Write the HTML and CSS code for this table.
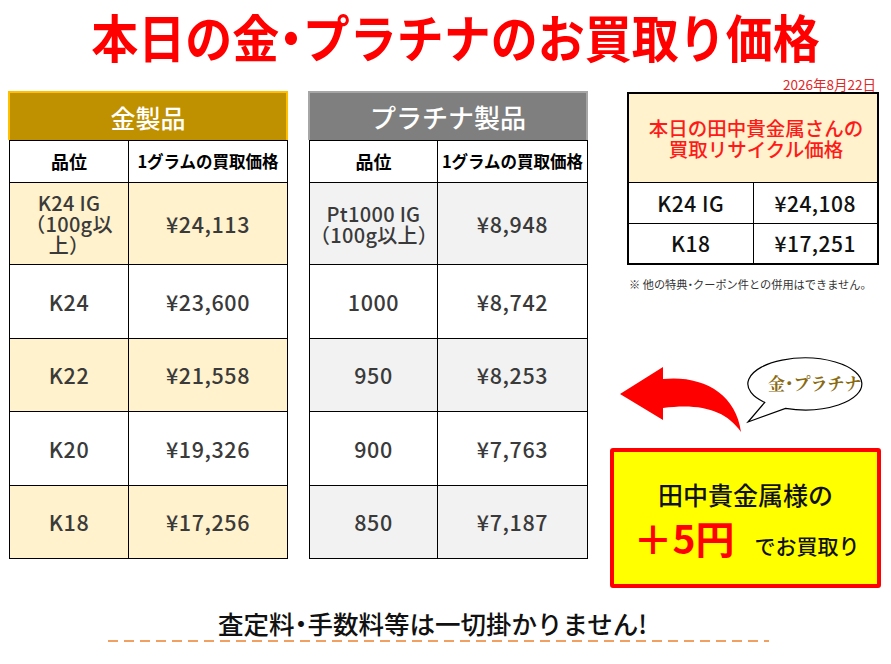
FILE: index.html
```html
<!DOCTYPE html>
<html lang="ja">
<head>
<meta charset="utf-8">
<title>本日の金・プラチナのお買取り価格</title>
<link rel="stylesheet" href="styles.css">
</head>
<body>
<div class="page">
  <h1 class="title"><span class="tt">本日の金<span class="dot">・</span>プラチナのお買取り価格</span></h1>
  <div class="main">
    <section class="board gold">
      <div class="hd">金製品</div>
      <table class="prices">
        <colgroup><col class="c1"><col class="c2"></colgroup>
        <tr class="th"><td class="q">品位</td><td>1グラムの買取価格</td></tr>
        <tr class="r1 alt"><td class="multi">K24 IG<br>（100g以<br>上）</td><td>¥24,113</td></tr>
        <tr class="r2"><td>K24</td><td>¥23,600</td></tr>
        <tr class="r3 alt"><td>K22</td><td>¥21,558</td></tr>
        <tr class="r4"><td>K20</td><td>¥19,326</td></tr>
        <tr class="r5 alt"><td>K18</td><td>¥17,256</td></tr>
      </table>
    </section>
    <section class="board plat">
      <div class="hd">プラチナ製品</div>
      <table class="prices">
        <colgroup><col class="c1"><col class="c2"></colgroup>
        <tr class="th"><td class="q">品位</td><td>1グラムの買取価格</td></tr>
        <tr class="r1 alt"><td class="multi">Pt1000 IG<br>（100g以上）</td><td>¥8,948</td></tr>
        <tr class="r2"><td>1000</td><td>¥8,742</td></tr>
        <tr class="r3 alt"><td>950</td><td>¥8,253</td></tr>
        <tr class="r4"><td>900</td><td>¥7,763</td></tr>
        <tr class="r5 alt"><td>850</td><td>¥7,187</td></tr>
      </table>
    </section>
    <aside class="side">
      <div class="date">2026年8月22日</div>
      <table class="recycle">
        <tr class="rhd"><td colspan="2">本日の田中貴金属さんの<br>買取リサイクル価格</td></tr>
        <tr class="rrow"><td class="rl">K24 IG</td><td>¥24,108</td></tr>
        <tr class="rrow"><td class="rl">K18</td><td>¥17,251</td></tr>
      </table>
      <p class="note">※ 他の特典<span class="pdot">・</span>クーポン件との併用はできません。</p>
      <svg class="callout" viewBox="610 292 281 155" width="281" height="155">
        <path d="M620,393 L663,366 L663,378 C702,374 736,392 741,431 C726,409 700,402 663,407 L663,419 Z" fill="#ff0000"/>
        <path d="M785.5,407.4 A57,26 0 1 0 764.7,401.4 L748,421 Z" fill="#ffffff" stroke="#000000" stroke-width="1.2"/>
        <text x="768" y="389" class="bubble-text">金<tspan class="pdot">・</tspan>プラチナ</text>
      </svg>
      <div class="bonus">
        <div class="b1">田中貴金属様の</div>
        <div class="b2"><span class="plus">＋5円</span><span class="tail">でお買取り</span></div>
      </div>
    </aside>
  </div>
  <footer class="foot">
    <p class="free">査定料<span class="pdot">・</span>手数料等は一切掛かりません!</p>
    <div class="dash"></div>
  </footer>
</div>
</body>
</html>
```
FILE: styles.css
```css
* { box-sizing: border-box; }
html, body { margin: 0; padding: 0; background: #ffffff; }
body {
  font-family: "Noto Sans CJK JP", "Noto Sans", sans-serif;
  color: #000;
}
.page { width: 891px; height: 664px; overflow: hidden; }

.title {
  margin: 0;
  height: 76px;
  display: flex;
  align-items: center;
  justify-content: center;
  padding-left: 20px;
  padding-bottom: 4px;
  color: #ff0000;
  font-size: 47px;
  font-weight: 700;
  line-height: 1.3;
}
.tt { display: inline-block; transform: scaleY(1.1); }
.title .dot { font-feature-settings: "palt" 1; }
.pdot { font-feature-settings: "palt" 1; }

.main { display: flex; padding-left: 8px; align-items: flex-start; }

.board { width: 280px; margin-top: 15px; }
.plat { margin-left: 20px; }

.hd {
  height: 49px;
  display: flex;
  align-items: center;
  justify-content: center;
  color: #ffffff;
  font-weight: 500;
}
.gold .hd { background: #bf9000; border: 2px solid #ffc000; border-bottom: none; font-size: 25px; }
.plat .hd { background: #7f7f7f; border: 2px solid #a6a6a6; border-bottom: none; font-size: 26px; }

.prices {
  width: 278px;
  margin: 0 1px;
  border-collapse: collapse;
  table-layout: fixed;
}
.gold .c1 { width: 119px; }
.gold .c2 { width: 159px; }
.plat .c1 { width: 128px; }
.plat .c2 { width: 150px; }
.prices td {
  border: 1px solid #000;
  text-align: center;
  vertical-align: middle;
  padding: 0;
  font-size: 21.5px;
  letter-spacing: 0.6px;
  color: #3a3a3a;
  font-weight: 500;
  line-height: 1.2;
}
.prices .th td { font-size: 16.5px; font-weight: 700; color: #000; letter-spacing: 0; }
.prices .th td.q { font-size: 18px; }
.prices .th { height: 42px; }
.prices .r1 { height: 82px; }
.prices .r2 { height: 74px; }
.prices .r3 { height: 73px; }
.prices .r4 { height: 74px; }
.prices .r5 { height: 73px; }
.prices td.multi { font-size: 20px; line-height: 21px; letter-spacing: 0.3px; }
.gold .alt td { background: #fff2cc; }
.plat .alt td { background: #f2f2f2; }

.side { width: 281px; margin-left: 22px; }
.date {
  height: 16px;
  line-height: 16px;
  font-size: 13.5px;
  color: #e02828;
  text-align: right;
  padding-right: 15px;
}
.recycle {
  margin-left: 17px;
  width: 252px;
  border-collapse: collapse;
  border: 2px solid #000;
  table-layout: fixed;
}
.recycle td {
  border: 1px solid #000;
  text-align: center;
  vertical-align: middle;
  padding: 0;
  font-size: 21px;
  letter-spacing: 0.5px;
  font-weight: 500;
  color: #111;
}
.recycle .rl { width: 120px; }
.rhd { height: 89px; }
.rhd td {
  background: #fff2cc;
  color: #ff1a1a;
  font-size: 19.5px;
  letter-spacing: 0;
  line-height: 21px;
  font-weight: 500;
  padding-left: 6px;
}
.rrow { height: 41px; }

.note {
  margin: 10px 0 0 19px;
  height: 18px;
  line-height: 18px;
  font-size: 11.2px;
  color: #333;
}

.callout { display: block; }
.bubble-text {
  font-family: "Noto Serif CJK JP", "Liberation Serif", serif;
  font-size: 17px;
  font-weight: 700;
  fill: #8a6a10;
}

.bonus {
  width: 271px;
  height: 140px;
  border: 4px solid #ff0000;
  border-radius: 3px;
  background: #ffff00;
  display: flex;
  flex-direction: column;
  align-items: center;
  justify-content: center;
  padding-top: 2px;
}
.b1 { font-size: 25px; line-height: 30px; color: #111; font-weight: 500; }
.b2 { display: flex; align-items: baseline; margin-top: 6px; padding-left: 2px; }
.plus { color: #ff0000; font-size: 39px; font-weight: 700; line-height: 44px; }
.tail { font-size: 21px; color: #111; margin-left: 20px; font-weight: 500; }

.foot { margin: 21px 0 0 108px; width: 661px; }
.free {
  margin: 0;
  text-align: center;
  padding-right: 12px;
  font-size: 25.5px;
  line-height: 27px;
  font-weight: 500;
  color: #111;
}
.dash {
  margin-top: 4px;
  height: 2px;
  background: repeating-linear-gradient(90deg, #f0a060 0 10px, transparent 10px 16px);
}
```
